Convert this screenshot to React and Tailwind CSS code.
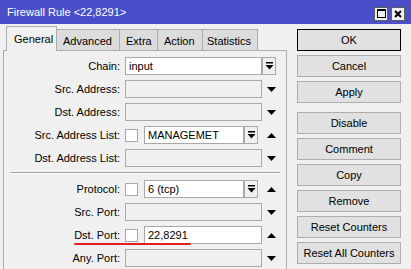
import React from "react";

const DropBtn = () => (
  <div className="w-[14px] h-[18px] border border-[#a9a9a9] bg-[#f0f0f0] flex items-center justify-center shrink-0">
    <svg width="9" height="8" viewBox="0 0 9 8">
      <rect x="1" y="0" width="7" height="1.5" fill="#000" />
      <path d="M0.5 3 L8.5 3 L4.5 7.5 Z" fill="#000" />
    </svg>
  </div>
);

const Down = () => (
  <svg width="9" height="5" viewBox="0 0 9 5" className="shrink-0">
    <path d="M0 0 L9 0 L4.5 5 Z" fill="#000" />
  </svg>
);
const Up = () => (
  <svg width="9" height="5" viewBox="0 0 9 5" className="shrink-0">
    <path d="M0 5 L9 5 L4.5 0 Z" fill="#000" />
  </svg>
);

const Check = () => (
  <div className="w-[13px] h-[13px] border border-[#a9a9a9] bg-white shrink-0" />
);

function Row({ label, children, arrow, labelClass = "" }) {
  return (
    <div className="flex items-center h-[18px] mb-[5px]">
      <div className={"w-[117px] text-right pr-[1px] " + labelClass}>{label}</div>
      <div className="ml-[4px] w-[137px] h-[18px] flex items-center">{children}</div>
      <div className="w-[20px] h-[18px] flex items-center pl-[5px]">{arrow}</div>
    </div>
  );
}

const Gray = () => (
  <div className="w-[137px] h-[18px] border border-[#a9a9a9] bg-[#f0f0f0]" />
);

const White = ({ text, w }) => (
  <div
    className="h-[18px] border border-[#a9a9a9] bg-white px-[3px] leading-[16px] text-black"
    style={{ width: w }}
  >
    {text}
  </div>
);

const Btn = ({ children, ok, extra = "" }) => (
  <div
    className={
      "w-[104px] h-[22px] flex items-center justify-center bg-[#e1e1e1] text-black " +
      (ok ? "border border-black " : "border border-[#adadad] ") +
      extra
    }
  >
    {children}
  </div>
);

export default function App() {
  return (
    <div
      className="w-[411px] h-[269px] bg-[#f0f0f0] overflow-hidden relative text-[11px] text-black"
      style={{ fontFamily: '"Liberation Sans", Arial, sans-serif' }}
    >
      {/* title bar */}
      <div className="h-[24px] bg-[#4a4fc9] flex items-center justify-between pl-[7px] pr-[6px]">
        <span className="text-white text-[11px]">Firewall Rule &lt;22,8291&gt;</span>
        <div className="flex gap-[3px] mt-[3px]">
          <div className="w-[14px] h-[14px] bg-[#f0f0f0] border border-[#606060] flex items-center justify-center">
            <div className="w-[9px] h-[9px] border border-black border-t-2" />
          </div>
          <div className="w-[14px] h-[14px] bg-[#f0f0f0] border border-[#606060] flex items-center justify-center">
            <svg width="8" height="8" viewBox="0 0 8 8">
              <path d="M1 1 L7 7 M7 1 L1 7" stroke="#000" strokeWidth="2" />
            </svg>
          </div>
        </div>
      </div>

      <div className="flex">
        {/* left */}
        <div className="w-[287px] pl-[3px]">
          {/* tabs */}
          <div className="flex items-end h-[26px] pl-[3px]">
            <div className="h-[25px] w-[51px] border border-b-0 border-[#adadad] bg-[#f0f0f0] pl-[7px] pt-[4px] relative z-10 -mb-px">
              General
            </div>
            <div className="h-[21px] w-[63px] border border-b-0 border-l-0 border-[#adadad] bg-[#dcdcdc] pl-[6px] pt-[3px]">
              Advanced
            </div>
            <div className="h-[21px] w-[38px] border border-b-0 border-l-0 border-[#adadad] bg-[#dcdcdc] pl-[6px] pt-[3px]">
              Extra
            </div>
            <div className="h-[21px] w-[45px] border border-b-0 border-l-0 border-[#adadad] bg-[#dcdcdc] pl-[6px] pt-[3px]">
              Action
            </div>
            <div className="h-[21px] w-[55px] border border-b-0 border-l-0 border-[#adadad] bg-[#dcdcdc] pl-[4px] pt-[3px]">
              Statistics
            </div>
          </div>
          {/* panel */}
          <div className="border border-b-0 border-[#adadad] h-[230px] pt-[6px]">
            <Row label="Chain:" arrow={<div className="-ml-[5px]"><DropBtn /></div>}>
              <div className="w-[137px] h-[18px] border border-[#a9a9a9] bg-white px-[3px] leading-[16px]">input</div>
            </Row>
            <Row label="Src. Address:" arrow={<Down />}>
              <Gray />
            </Row>
            <Row label="Dst. Address:" arrow={<Down />}>
              <Gray />
            </Row>
            <Row label="Src. Address List:" arrow={<Up />}>
              <Check />
              <div className="ml-[6px] flex">
                <White text="MANAGEMET" w={100} />
                <DropBtn />
              </div>
            </Row>
            <Row label="Dst. Address List:" arrow={<Down />}>
              <Gray />
            </Row>
            <div className="mx-[6px] h-[2px] border-t border-[#a0a0a0] border-b border-b-white mt-[1px] mb-[6px]" />
            <Row label="Protocol:" arrow={<Up />}>
              <Check />
              <div className="ml-[6px] flex">
                <White text="6 (tcp)" w={100} />
                <DropBtn />
              </div>
            </Row>
            <Row label="Src. Port:" arrow={<Down />}>
              <Gray />
            </Row>
            <Row label="Dst. Port:" arrow={<Up />}>
              <Check />
              <div className="ml-[6px] flex">
                <White text="22,8291" w={118} />
              </div>
            </Row>
            <Row label="Any. Port:" arrow={<Down />}>
              <Gray />
            </Row>
          </div>
        </div>

        {/* right */}
        <div className="pl-[10px] pt-[5px] flex flex-col gap-[4px]">
          <Btn ok>OK</Btn>
          <Btn>Cancel</Btn>
          <Btn>Apply</Btn>
          <Btn extra="mt-[5px]">Disable</Btn>
          <Btn>Comment</Btn>
          <Btn>Copy</Btn>
          <Btn>Remove</Btn>
          <Btn>Reset Counters</Btn>
          <Btn>Reset All Counters</Btn>
        </div>
      </div>

      {/* red underline annotation */}
      <div className="absolute left-[74px] top-[243px] w-[117px] h-[2px] bg-[#e0201c] rounded-full" />
    </div>
  );
}
